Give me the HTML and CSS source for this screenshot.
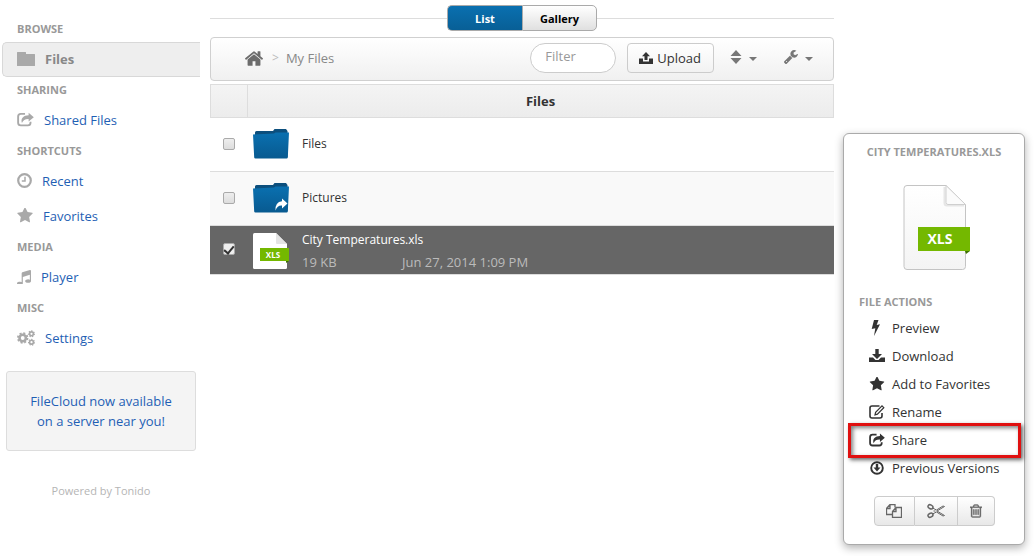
FILE: index.html
```html
<!DOCTYPE html>
<html lang="en">
<head>
    <meta charset="UTF-8">
    <meta name="viewport" content="width=device-width, initial-scale=1.0">
    <title>My Files</title>
    <link rel="stylesheet" href="styles.css">
</head>
<body>
    <svg class="defs" aria-hidden="true">
        <defs>
            <linearGradient id="blue" x1="0" y1="0" x2="0" y2="1">
                <stop offset="0" stop-color="#0a70b0"/>
                <stop offset="1" stop-color="#085a90"/>
            </linearGradient>
            <linearGradient id="paper" x1="0" y1="0" x2="0" y2="1">
                <stop offset="0" stop-color="#fff"/>
                <stop offset="1" stop-color="#f4f4f4"/>
            </linearGradient>
        </defs>
        <symbol id="share" viewBox="0 0 18 15">
            <path d="M8.500 1.500H4Q1.200 1.500 1.200 4.300v6.600Q1.200 13.700 4 13.700h7.500q2.800 0 2.800-2.800V10" fill="none" stroke="currentColor" stroke-width="2"/>
            <path d="M12.300 0.300 17.800 5 12.300 9.700V7C8.500 6.900 6.700 8 5.200 11.200 3.500 6.300 7 3 12.300 3z" fill="currentColor"/>
        </symbol>
        <symbol id="star" viewBox="64 96 1664 1600">
            <path fill="currentColor" d="M1728 647q0 22-26 48l-363 354 86 500q1 7 1 20 0 21-10.500 35.500t-30.500 14.500q-19 0-40-12l-449-236-449 236q-22 12-40 12-21 0-31.500-14.500t-10.500-35.500q0-6 2-20l86-500-364-354q-25-27-25-48 0-37 56-46l502-73 225-455q19-41 49-41t49 41l225 455 502 73q56 9 56 46z"/>
        </symbol>
        <symbol id="folder" viewBox="0 0 36 30">
            <path d="M2 28V3.500Q2 2 3.500 2H20l1.500-2H33l1.500 2v26z" fill="#0c4f7d"/>
            <path d="M0 5.500 21 4.500 22.500 3.500H36L34.800 28.500Q34.700 29.500 33.600 29.500H2.400Q1.300 29.500 1.200 28.500z" fill="url(#blue)"/>
        </symbol>
    </svg>

    <div class="page">
        <nav class="sidebar">
            <h2>BROWSE</h2>
            <a href="#" class="active">
                <svg width="18" height="14" viewBox="0 0 18 14"><path fill="currentColor" d="M0 0.500Q0 0 0.500 0H8.500Q9 0 9 0.500V2h8.500q0.500 0 0.500 0.500v11q0 0.500-0.500 0.500H0.500Q0 14 0 13.500z"/></svg>
                Files
            </a>
            <h2>SHARING</h2>
            <a href="#"><svg width="17" height="15"><use href="#share"/></svg>Shared Files</a>
            <h2>SHORTCUTS</h2>
            <a href="#">
                <svg width="15" height="15" viewBox="0 0 15 15" fill="none" stroke="currentColor"><circle cx="7.500" cy="7.500" r="6.300" stroke-width="2.200"/><path d="M8 3.800V8H4.800" stroke-width="1.500"/></svg>
                Recent
            </a>
            <a href="#"><svg width="16" height="15"><use href="#star"/></svg>Favorites</a>
            <h2>MEDIA</h2>
            <a href="#">
                <svg width="14" height="14" viewBox="128 128 1536 1536"><path fill="currentColor" d="M1664 224v1120q0 50-34 89t-86 60.500-103.500 32-96.500 10.500-96.500-10.500-103.500-32-86-60.500-34-89 34-89 86-60.500 103.500-32 96.500-10.500q105 0 192 39v-537l-768 237v709q0 50-34 89t-86 60.500-103.500 32-96.500 10.500-96.500-10.500-103.500-32-86-60.500-34-89 34-89 86-60.500 103.500-32 96.500-10.500q105 0 192 39v-967q0-31 19-56.500t49-35.500l832-256q12-4 28-4 40 0 68 28t28 68z"/></svg>
                Player
            </a>
            <h2>MISC</h2>
            <a href="#">
                <svg width="18" height="16" viewBox="0 0 18 16" fill="none" stroke="currentColor">
                    <circle cx="5.700" cy="8" r="3.200" stroke-width="2.600"/>
                    <circle cx="5.700" cy="8" r="4.800" stroke-width="1.800" stroke-dasharray="2 1.770"/>
                    <circle cx="14.500" cy="3.800" r="1.900" stroke-width="1.600"/>
                    <circle cx="14.500" cy="3.800" r="2.900" stroke-width="1.200" stroke-dasharray="1.300 1.300"/>
                    <circle cx="14.500" cy="12.200" r="1.900" stroke-width="1.600"/>
                    <circle cx="14.500" cy="12.200" r="2.900" stroke-width="1.200" stroke-dasharray="1.300 1.300"/>
                </svg>
                Settings
            </a>
            <div class="promo"><a href="#">FileCloud now available on a server near you!</a></div>
            <p class="powered">Powered by Tonido</p>
        </nav>

        <main>
            <div class="view-switch">
                <button type="button" class="on">List</button>
                <button type="button">Gallery</button>
            </div>

            <div class="toolbar">
                <a href="#" class="home" aria-label="Home">
                    <svg width="18" height="15" viewBox="89 250 1614 1290"><path fill="currentColor" d="M1472 992v480q0 26-19 45t-45 19h-384v-384h-256v384h-384q-26 0-45-19t-19-45v-480q0-1 .5-3t.5-3l575-474 575 474q1 2 1 6zm223-69l-62 74q-8 9-21 11h-3q-13 0-21-7l-692-577-692 577q-12 8-24 7-13-2-21-11l-62-74q-8-10-7-23.500t11-21.500l719-599q32-26 76-26t76 26l244 204v-195q0-14 9-23t23-9h192q14 0 23 9t9 23v408l219 182q10 8 11 21.500t-7 23.500z"/></svg>
                </a>
                <span class="sep">&gt;</span>
                <a href="#" class="crumb">My Files</a>
                <input type="text" class="filter" placeholder="Filter" aria-label="Filter">
                <button type="button" class="upload">
                    <svg width="14" height="12" viewBox="0 0 14 12" fill="currentColor"><path d="M7 0l4 4.300H8.500V8h-3V4.300H3z"/><path d="M0 6.500h4v3h6v-3h4V12H0z"/></svg>
                    Upload
                </button>
                <button type="button" class="tool" aria-label="Sort">
                    <svg width="12" height="14" viewBox="0 0 12 14" fill="currentColor"><path d="M6 0l5.500 6h-11zM6 14l5.500-6h-11z"/></svg>
                    <span class="caret"></span>
                </button>
                <button type="button" class="tool" aria-label="Tools">
                    <svg width="14" height="14" viewBox="85 125 1645 1650"><path fill="currentColor" d="M448 1472q0-26-19-45t-45-19-45 19-19 45 19 45 45 19 45-19 19-45zm644-420l-682 682q-37 37-90 37-52 0-91-37l-106-108q-38-36-38-90 0-53 38-91l681-681q39 98 114.500 173.500t173.500 114.500zm634-435q0 39-23 106-47 134-164.500 217.500t-258.500 83.500q-185 0-316.500-131.500t-131.500-316.500 131.500-316.500 316.500-131.500q58 0 121.500 16.500t107.500 46.500q16 11 16 28t-16 28l-293 169v224l193 107q5-3 79-48.500t135.500-81 70.500-35.500q15 0 23.500 10t8.500 25z"/></svg>
                    <span class="caret"></span>
                </button>
            </div>

            <table class="files">
                <thead>
                    <tr><th class="check"></th><th>Files</th></tr>
                </thead>
                <tbody>
                    <tr>
                        <td class="check"><input type="checkbox" id="f1"></td>
                        <td><div class="file"><svg width="36" height="30"><use href="#folder"/></svg><label for="f1">Files</label></div></td>
                    </tr>
                    <tr class="alt">
                        <td class="check"><input type="checkbox" id="f2"></td>
                        <td>
                            <div class="file">
                                <svg width="36" height="30" viewBox="0 0 36 30"><use href="#folder"/><path fill="#fff" d="M29 15.500l5.500 5-5.500 5v-3q-4.500-0.500-6.500 5-0.500-8.500 6.500-9.200z"/></svg>
                                <label for="f2">Pictures</label>
                            </div>
                        </td>
                    </tr>
                    <tr class="selected">
                        <td class="check"><input type="checkbox" id="f3" checked></td>
                        <td>
                            <div class="file">
                                <svg width="36" height="38" viewBox="0 0 36 38">
                                    <path d="M1.500 1H23L34 12V35.500Q34 37 32.500 37H1.500Q0 37 0 35.500V2.500Q0 1 1.500 1z" fill="#fff"/>
                                    <path d="M23 1 34 12H24q-1 0-1-1z" fill="#e4e4e4"/>
                                    <path d="M33 29h3l-3 2z" fill="#3c7000"/>
                                    <path d="M7 16h29v13H7z" fill="#74b800"/>
                                    <text x="20" y="26" text-anchor="middle" class="xls-small">XLS</text>
                                </svg>
                                <div>
                                    <label for="f3">City Temperatures.xls</label>
                                    <div class="meta"><span>19 KB</span><span>Jun 27, 2014 1:09 PM</span></div>
                                </div>
                            </div>
                        </td>
                    </tr>
                </tbody>
            </table>
        </main>

        <aside class="details">
            <h2 class="name">CITY TEMPERATURES.XLS</h2>
            <svg class="preview" width="72" height="88" viewBox="-5 0 72 88">
                <path d="M4 1.500H43L62.500 20.500V82.500q0 3-3 3H4q-3 0-3-3v-78q0-3 3-3z" fill="url(#paper)" stroke="#c4c4c4"/>
                <path d="M41.500 3V19q0 2.500 2.500 2.500H61" fill="none" stroke="#e6e6e6" stroke-width="2"/>
                <path d="M43 1.500 62.500 20.500H45q-2 0-2-2z" fill="#fbfbfb" stroke="#cfcfcf"/>
                <path d="M62 67h5l-4 3z" fill="#3c7000"/>
                <path d="M15 43h52v24H15z" fill="#74b800"/>
                <text x="37" y="60" text-anchor="middle" class="xls-text">XLS</text>
            </svg>
            <h2>FILE ACTIONS</h2>
            <ul>
                <li><a href="#"><svg width="16" height="16" viewBox="0 0 16 16"><path fill="currentColor" d="M5 0h4.500L7.700 5 11 4.200 5 16 6.300 8.200 2.700 9z"/></svg>Preview</a></li>
                <li><a href="#"><svg width="16" height="16" viewBox="0 0 16 16" fill="currentColor"><path d="M6.300 1h3.400v5H13L8 11 3 6h3.300z"/><path d="M0 9.500h4l2.500 2.500h3L12 9.500h4V14H0z"/></svg>Download</a></li>
                <li><a href="#"><svg width="16" height="14"><use href="#star"/></svg>Add to Favorites</a></li>
                <li><a href="#"><svg width="16" height="16" viewBox="0 0 16 16" fill="none" stroke="currentColor"><path d="M10.500 2H3Q1 2 1 4v8q0 2 2 2h8q2 0 2-2V9" stroke-width="1.600"/><path d="M6 10.800 6.600 8.300 13 1.900 14.800 3.700 8.400 10.100z" stroke-width="1.200"/></svg>Rename</a></li>
                <li class="marked"><a href="#"><svg width="16" height="14"><use href="#share"/></svg>Share</a></li>
                <li><a href="#"><svg width="16" height="14" viewBox="0 0 16 14"><circle cx="8" cy="7" r="5.800" fill="none" stroke="currentColor" stroke-width="1.900"/><path fill="currentColor" d="M6.800 3h2.400v3.500h2.300L8 10.500 4.500 6.500h2.300z"/></svg>Previous Versions</a></li>
            </ul>
            <div class="actions">
                <button type="button" aria-label="Copy">
                    <svg width="16" height="14" viewBox="0 0 16 14" fill="none" stroke="currentColor" stroke-width="1.300"><path d="M6.500 10.500h-6v-6l3.500-4h5v3M4 0.500v4H0.500"/><path d="M6.500 7.500l3.500-4h5.500v10h-9zM10 3.500v4H6.500"/></svg>
                </button>
                <button type="button" aria-label="Cut">
                    <svg width="18" height="16" viewBox="0 0 18 16" fill="none" stroke="currentColor"><ellipse cx="3.500" cy="3.800" rx="2.600" ry="1.900" stroke-width="1.500" transform="rotate(25 3.500 3.800)"/><ellipse cx="3.500" cy="12.200" rx="2.600" ry="1.900" stroke-width="1.500" transform="rotate(-25 3.500 12.200)"/><path d="M5.500 5 9.500 7 16 3l1.500 0.500L10 8l7.500 4.500L16 13 9.500 9l-4 2M6.500 8h2"/></svg>
                </button>
                <button type="button" aria-label="Delete">
                    <svg width="12" height="14" viewBox="192 128 1408 1536"><path fill="currentColor" stroke="currentColor" stroke-width="40" d="M704 736v576q0 14-9 23t-23 9h-64q-14 0-23-9t-9-23v-576q0-14 9-23t23-9h64q14 0 23 9t9 23zm256 0v576q0 14-9 23t-23 9h-64q-14 0-23-9t-9-23v-576q0-14 9-23t23-9h64q14 0 23 9t9 23zm256 0v576q0 14-9 23t-23 9h-64q-14 0-23-9t-9-23v-576q0-14 9-23t23-9h64q14 0 23 9t9 23zm128 724v-948h-896v948q0 22 7 40.500t14.500 27 10.500 8.500h832q3 0 10.500-8.500t14.500-27 7-40.500zm-672-1076h448l-48-117q-7-9-17-11h-317q-10 2-17 11zm928 32v64q0 14-9 23t-23 9h-96v948q0 83-47 143.500t-113 60.500h-832q-66 0-113-58.500t-47-141.500v-952h-96q-14 0-23-9t-9-23v-64q0-14 9-23t23-9h309l70-167q15-37 54-63t79-26h320q40 0 79 26t54 63l70 167h309q14 0 23 9t9 23z"/></svg>
                </button>
            </div>
        </aside>
    </div>
</body>
</html>
```
FILE: styles.css
```css
* {
    box-sizing: border-box;
}
body {
    margin: 0;
    font-family: "Open Sans", "Noto Sans", sans-serif;
    font-size: 13px;
    line-height: 20px;
    color: #333;
    background: #fff;
}
a {
    text-decoration: none;
    color: #1f5fb4;
}
h2 {
    margin: 0;
    font-size: 11px;
    font-weight: bold;
    line-height: 26px;
    color: #999;
}
button, input {
    font-family: inherit;
    font-size: 13px;
    margin: 0;
}
button {
    cursor: pointer;
}
svg {
    flex: none;
}
.defs {
    position: absolute;
    width: 0;
    height: 0;
}
.page {
    display: grid;
    grid-template-columns: 201px 1fr 182px;
    column-gap: 9px;
    align-items: start;
    padding: 0 10px 11px 0;
}

/* sidebar */
.sidebar {
    padding: 16px 1px 0 2px;
}
.sidebar h2 {
    padding-left: 15px;
}
.sidebar > a {
    display: flex;
    align-items: center;
    gap: 10px;
    height: 35px;
    padding: 0 0 2px 14px;
    border: 1px solid transparent;
}
.sidebar > a svg {
    color: #a9a9a9;
}
.sidebar > a.active {
    font-weight: bold;
    color: #888;
    background: #eee;
    border-color: #d8d8d8;
    border-right: none;
    border-radius: 5px 0 0 5px;
}
.promo {
    margin: 15px 4px 0;
    padding: 19px;
    text-align: center;
    background: #f4f4f4;
    border: 1px solid #ddd;
    border-radius: 3px;
}
.powered {
    margin: 30px 0 0;
    font-size: 11px;
    text-align: center;
    color: #b5b5b5;
}

/* list / gallery */
.view-switch {
    display: flex;
    align-items: center;
    padding-top: 5px;
}
.view-switch::before, .view-switch::after {
    content: "";
    flex: 1;
    border-top: 1px solid #ddd;
}
.view-switch button {
    width: 75px;
    height: 26px;
    padding: 0;
    font-size: 11px;
    font-weight: bold;
    color: #000;
    background: linear-gradient(#fff, #e0e0e0);
    border: 1px solid #aaa;
    border-radius: 0 5px 5px 0;
}
.view-switch button.on {
    color: #fff;
    background: linear-gradient(#0a70b0, #085f96);
    border-radius: 5px 0 0 5px;
    border-right: none;
}

/* toolbar */
.toolbar {
    display: flex;
    align-items: center;
    height: 44px;
    margin: 6px 0 3px;
    padding: 0 20px 2px 34px;
    background: linear-gradient(#fff, #f0f0f0);
    border: 1px solid #d0d0d0;
    border-radius: 4px;
}
.home {
    display: flex;
    color: #6c6c6c;
}
.sep {
    margin: 0 7px 0 9px;
    font-size: 12px;
    color: #bbb;
}
.crumb {
    color: #888;
}
.filter {
    width: 86px;
    height: 30px;
    margin-left: auto;
    padding: 0 14px 4px;
    background: #fff;
    border: 1px solid #ccc;
    border-radius: 15px;
}
.filter::placeholder {
    color: #999;
}
.upload {
    display: flex;
    align-items: center;
    gap: 4px;
    height: 30px;
    margin: 0 16px 0 11px;
    padding: 0 12px 0 11px;
    color: #333;
    background: linear-gradient(#fff, #f2f2f2);
    border: 1px solid #ccc;
    border-radius: 4px;
}
.tool {
    display: flex;
    align-items: center;
    gap: 7px;
    padding: 0 0 3px;
    color: #777;
    background: none;
    border: none;
}
.tool + .tool {
    margin-left: 27px;
}
.caret {
    margin-top: 4px;
    border: 4px solid transparent;
    border-top-color: #777;
    border-bottom: none;
}

/* file table */
.files {
    width: 100%;
    border-spacing: 0;
}
.files th {
    height: 34px;
    padding: 0;
    background: linear-gradient(#f4f4f4, #ececec);
    border: 1px solid #ddd;
    border-left: none;
}
.files th.check {
    border-left: 1px solid #ddd;
}
.files td {
    height: 54px;
    padding: 0 0 2px 5px;
    border-bottom: 1px solid #ddd;
}
.files .check {
    width: 38px;
}
.files td.check {
    padding: 0 0 2px;
    text-align: center;
}
.alt td {
    background: #f9f9f9;
}
.files .selected td {
    height: 49px;
    color: #fff;
    background: #666;
}
.files .selected td:last-child {
    padding: 2px 0 0 5px;
}
.file {
    display: flex;
    align-items: center;
    gap: 13px;
}
.file label {
    display: block;
    font-size: 12px;
}
.meta {
    display: grid;
    grid-template-columns: 100px 1fr;
    margin-top: 2px;
    color: #bbb;
}
.check input {
    appearance: none;
    display: block;
    width: 12px;
    height: 12px;
    margin: 0 auto;
    background: linear-gradient(#eee, #ddd);
    border: 1px solid #aaa;
    border-radius: 2px;
}
.check input:checked {
    background: #eee;
}
.check input:checked::before {
    content: "";
    display: block;
    width: 4px;
    height: 8px;
    margin: 0 auto;
    border: solid #333;
    border-width: 0 2px 2px 0;
    transform: rotate(40deg);
}
.xls-text {
    font-size: 14px;
    font-weight: bold;
    fill: #fff;
}
.xls-small {
    font-size: 8px;
    font-weight: bold;
    fill: #fff;
}

/* details panel */
.details {
    margin-top: 133px;
    padding: 5px 15px 18px;
    background: #fff;
    border: 1px solid #aaa;
    border-radius: 6px;
    box-shadow: 0 3px 8px rgba(0, 0, 0, 0.3);
}
.details .name {
    text-align: center;
}
.preview {
    display: block;
    margin: 19px auto 17px;
}
.details ul {
    list-style: none;
    margin: 0;
    padding: 0;
}
.details li a {
    display: flex;
    align-items: center;
    gap: 7px;
    height: 28px;
    padding: 0 0 2px 10px;
    color: #333;
}
.marked {
    position: relative;
}
.marked::after {
    content: "";
    position: absolute;
    inset: -4px -12px -3px -11px;
    border: 3px solid #e01010;
    box-shadow: 2px 2px 4px rgba(0, 0, 0, 0.6), inset 2px 2px 4px rgba(0, 0, 0, 0.5);
    pointer-events: none;
}
.actions {
    display: flex;
    justify-content: center;
    margin-top: 13px;
}
.actions button {
    display: flex;
    align-items: center;
    justify-content: center;
    width: 41px;
    height: 30px;
    padding: 0;
    color: #666;
    background: linear-gradient(#fff, #e8e8e8);
    border: 1px solid #ccc;
}
.actions button + button {
    width: 43px;
    border-left: none;
}
.actions button:first-child {
    border-radius: 4px 0 0 4px;
}
.actions button:last-child {
    width: 37px;
    border-radius: 0 4px 4px 0;
}
```
